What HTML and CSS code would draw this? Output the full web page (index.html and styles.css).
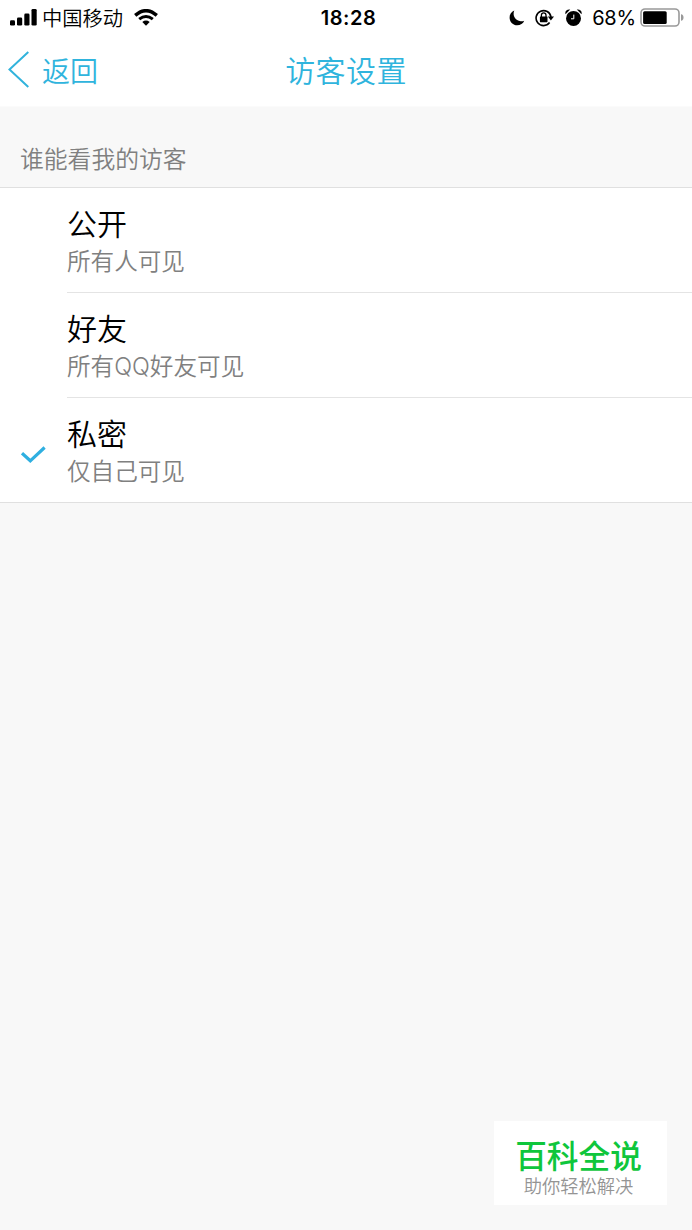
FILE: index.html
```html
<!DOCTYPE html>
<html lang="zh-CN">
<head>
<meta charset="utf-8">
<title>访客设置</title>
<link rel="stylesheet" href="styles.css">
</head>
<body>
<div class="screen">
  <header class="top">
    <div class="status">
      <div class="status-left">
        <svg class="signal" width="28" height="17" viewBox="0 0 28 17"><rect x="0" y="11.3" width="5" height="5.2" rx="1.3"/><rect x="7" y="8.5" width="5.2" height="8" rx="1.3"/><rect x="14.3" y="4.6" width="5.2" height="11.9" rx="1.3"/><rect x="21.5" y="0" width="5.2" height="16.5" rx="1.3"/></svg>
        <span class="carrier">中国移动</span>
        <svg class="wifi" width="24" height="17" viewBox="0 0 24 17"><path d="M1.2 6.4Q12-3.1 22.8 6.4" fill="none" stroke="#000" stroke-width="3.4"/><path d="M5.2 10.2Q12 4.7 18.8 10.2" fill="none" stroke="#000" stroke-width="3"/><path d="M8.3 13Q12 10.2 15.7 13L12 16.7Z"/></svg>
      </div>
      <div class="clock">18:28</div>
      <div class="status-right">
        <svg width="16" height="16" viewBox="0 0 16 16"><path d="M5.3.6C2.2 1.8.4 4.7.6 8c.3 4.2 3.5 7.3 7.6 7.3 3.2 0 6-1.8 7-4.6-1.1.5-2.2.7-3.5.6C6.4 11 3.1 5.5 5.3.6Z"/></svg>
        <svg class="lock" width="19" height="18" viewBox="0 0 19 18"><path d="M14.6 13.6A7.5 7.5 0 1 1 16 8" fill="none" stroke="#000" stroke-width="1.6"/><path d="M12.9 7.6h6.1l-3.1 4Z"/><rect x="4.9" y="7.5" width="7.6" height="5.7" rx=".6"/><path d="M6.4 8V6.2a2.3 2.3 0 0 1 4.6 0V8" fill="none" stroke="#000" stroke-width="1.3"/></svg>
        <svg class="alarm" width="17" height="17" viewBox="0 0 17 17"><circle cx="8.5" cy="9.4" r="7.5"/><path d="M.5 5.2C-.4 2.2 2 0 5.2.6ZM16.5 5.2C17.4 2.2 15 0 11.8.6Z"/><path d="M8.8 5.6v4.2H6" fill="none" stroke="#fff" stroke-width="1"/></svg>
        <span class="percent">68%</span>
        <svg class="battery" width="44" height="20" viewBox="0 0 44 20"><rect x="1" y="1" width="38" height="17" rx="4" fill="#fff" stroke="#999" stroke-width="1.6"/><rect x="3.1" y="3.2" width="23.6" height="12.7" rx="1.5"/><path d="M41 6.2q2.5.4 2.5 3.3T41 12.8Z" fill="#999"/></svg>
      </div>
    </div>
    <nav class="nav">
      <div class="back">
        <svg width="22" height="37" viewBox="0 0 22 37"><path d="M20.3 1L1.5 18.5 20.3 36" fill="none" stroke="#31b3dc" stroke-width="2"/></svg>
        <span class="back-label">返回</span>
      </div>
      <h1 class="title">访客设置</h1>
      <div></div>
    </nav>
  </header>
  <h2 class="section">谁能看我的访客</h2>
  <ul class="list">
    <li class="row"><div class="mark"></div><div class="option"><div class="name">公开</div><div class="desc">所有人可见</div></div></li>
    <li class="row"><div class="mark"></div><div class="option"><div class="name">好友</div><div class="desc">所有<span class="latin">QQ</span>好友可见</div></div></li>
    <li class="row"><div class="mark"><svg width="25" height="18" viewBox="0 0 25 18"><path d="M1 7.2L9.3 14.8 23.6 1.5" fill="none" stroke="#2fafe0" stroke-width="3.2"/></svg></div><div class="option"><div class="name">私密</div><div class="desc">仅自己可见</div></div></li>
  </ul>
  <aside class="badge">
    <div class="brand">百科全说</div>
    <div class="slogan">助你轻松解决</div>
  </aside>
</div>
</body>
</html>
```
FILE: styles.css
```css
* { box-sizing: border-box; }
body {
  margin: 0;
  background: #f8f8f8;
  color: #000;
  font-family: "Noto Sans CJK SC", sans-serif;
  font-weight: 350;
}
svg { display: block; flex: none; }
.screen { position: relative; height: 1230px; overflow: hidden; }
.top { height: 107px; background: #fff; border-bottom: 1px solid #fbfbfb; }
.status {
  display: grid;
  grid-template-columns: 1fr auto 1fr;
  align-items: center;
  height: 34px;
  padding: 0 8px 0 10px;
}
.status-left, .status-right { display: flex; align-items: center; }
.carrier { margin-left: 4px; padding-bottom: 2px; font-size: 20.3px; line-height: 32px; }
.wifi { margin-left: 11px; }
.clock {
  padding-left: 3px;
  font: 600 20px/34px Inter, sans-serif;
  letter-spacing: 0.5px;
}
.status-right { justify-content: flex-end; }
.lock { margin-left: 10px; }
.alarm { margin-left: 11px; }
.percent {
  margin-left: 10px;
  padding-top: 1px;
  font: 400 20px/34px Inter, sans-serif;
  letter-spacing: -0.2px;
}
.battery { margin-left: 4px; }
.nav {
  display: grid;
  grid-template-columns: 1fr auto 1fr;
  align-items: center;
  height: 71px;
  padding: 0 8px;
  color: #2fb4dd;
}
.back { display: flex; align-items: center; gap: 12px; font-size: 28px; }
.back-label { padding-top: 2px; line-height: 69px; }
.title {
  margin: 0;
  font-size: 30px;
  font-weight: 350;
  line-height: 71px;
  letter-spacing: 0.4px;
}
.section {
  height: 80px;
  margin: 0;
  padding: 33px 0 0 20px;
  color: #808080;
  font-size: 23.8px;
  font-weight: 350;
  line-height: 36px;
}
.list {
  margin: 0;
  padding: 0;
  list-style: none;
  background: #fff;
  border-top: 1px solid #e0e0e0;
  border-bottom: 1px solid #e0e0e0;
}
.row { display: flex; height: 105px; }
.row:last-child { height: 104px; }
.mark { width: 67px; padding: 48px 0 0 21px; }
.option { flex: 1; padding-top: 14px; border-bottom: 1px solid #e4e4e4; }
.row:last-child .option { border-bottom: 0; }
.name { font-size: 30px; line-height: 40px; }
.desc { color: #808080; font-size: 23.6px; line-height: 36px; }
.latin { font-family: Inter, sans-serif; font-size: 23.5px; }
.badge {
  position: absolute;
  left: 494px;
  top: 1121px;
  width: 173px;
  height: 84px;
  padding: 13px 4px 0 0;
  background: #fff;
  text-align: center;
}
.brand { color: #0fc63c; font-size: 31.7px; font-weight: 500; line-height: 40px; }
.slogan { color: #949494; font-size: 18.3px; line-height: 22px; }
```
